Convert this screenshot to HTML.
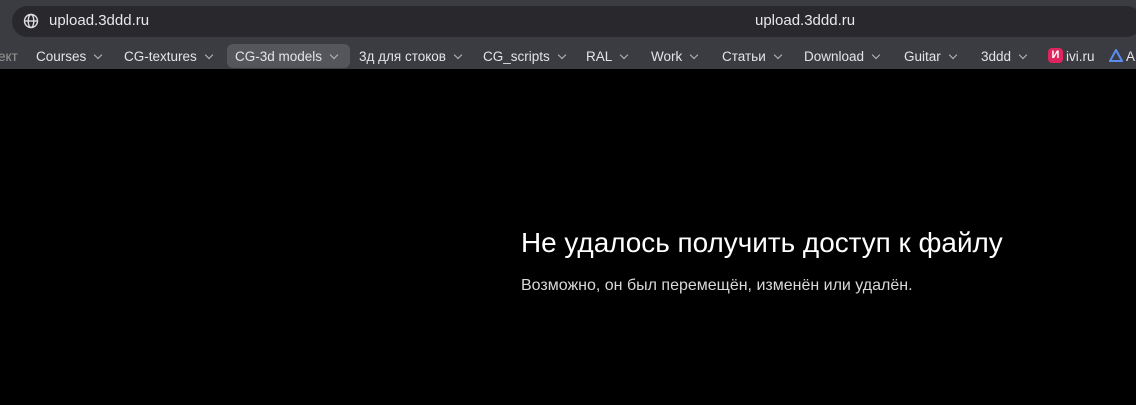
<!DOCTYPE html>
<html><head><meta charset="utf-8"><style>
*{margin:0;padding:0;box-sizing:border-box}
body{width:1136px;height:405px;background:#000;overflow:hidden;font-family:"Liberation Sans","Noto Sans CJK SC",sans-serif;position:relative}
#top{position:absolute;left:0;top:0;width:1136px;height:69px;background:#3b3b42}
#addr{position:absolute;left:12px;top:6px;width:1130px;height:31px;background:#28282d;border-radius:16px}
.url{position:absolute;top:12px;color:#e8e8ec;font-size:15px}
.bm{position:absolute;top:49px;color:#e4e4e8;font-size:13.5px;white-space:nowrap}
.ch{display:inline-block;width:6px;height:6px;border-right:1.3px solid #bbb;border-bottom:1.3px solid #bbb;transform:rotate(45deg);margin-left:9px;position:relative;top:-3px}
#sel{position:absolute;left:227px;top:44px;width:123px;height:24px;background:#55555c;border-radius:6px}
h1{position:absolute;left:521px;top:227px;font-size:27.9px;font-weight:normal;color:#fff;white-space:nowrap}
p{position:absolute;left:521px;top:277px;font-size:16px;color:#d8d8d8;white-space:nowrap}
</style></head><body>
<div id="top">
<div id="addr"></div>
<svg style="position:absolute;left:23px;top:13px" width="16" height="16" viewBox="0 0 16 16" fill="none" stroke="#ddd" stroke-width="1.4"><circle cx="8" cy="8" r="6.5"/><ellipse cx="8" cy="8" rx="2.8" ry="6.5"/><line x1="1.5" y1="8" x2="14.5" y2="8"/></svg>
<div class="url" style="left:49px">upload.3ddd.ru</div>
<div class="url" style="left:755px">upload.3ddd.ru</div>
<div id="sel"></div>
<div class="bm" style="left:-2px;color:#999">ект</div>
<div class="bm" style="left:36px">Courses<span class="ch"></span></div>
<div class="bm" style="left:124px">CG-textures<span class="ch"></span></div>
<div class="bm" style="left:235px">CG-3d models<span class="ch"></span></div>
<div class="bm" style="left:359px">3д для стоков<span class="ch"></span></div>
<div class="bm" style="left:483px">CG_scripts<span class="ch"></span></div>
<div class="bm" style="left:586px">RAL<span class="ch"></span></div>
<div class="bm" style="left:651px">Work<span class="ch"></span></div>
<div class="bm" style="left:722px">Статьи<span class="ch"></span></div>
<div class="bm" style="left:804px">Download<span class="ch"></span></div>
<div class="bm" style="left:904px">Guitar<span class="ch"></span></div>
<div class="bm" style="left:981px">3ddd<span class="ch"></span></div>
<div style="position:absolute;left:1048px;top:48px;width:15px;height:15px;border-radius:4px;background:#e0245e;color:#fff;font-size:11px;font-weight:bold;text-align:center;line-height:15px">И</div>
<div class="bm" style="left:1066px">ivi.ru</div>
<svg style="position:absolute;left:1109px;top:49px" width="14" height="13" viewBox="0 0 14 13"><path d="M7 1L13 12H1Z" fill="none" stroke="#5b8cf0" stroke-width="2"/></svg>
<div class="bm" style="left:1126px">A</div>
</div>
<h1>Не удалось получить доступ к файлу</h1>
<p>Возможно, он был перемещён, изменён или удалён.</p>
</body></html>
